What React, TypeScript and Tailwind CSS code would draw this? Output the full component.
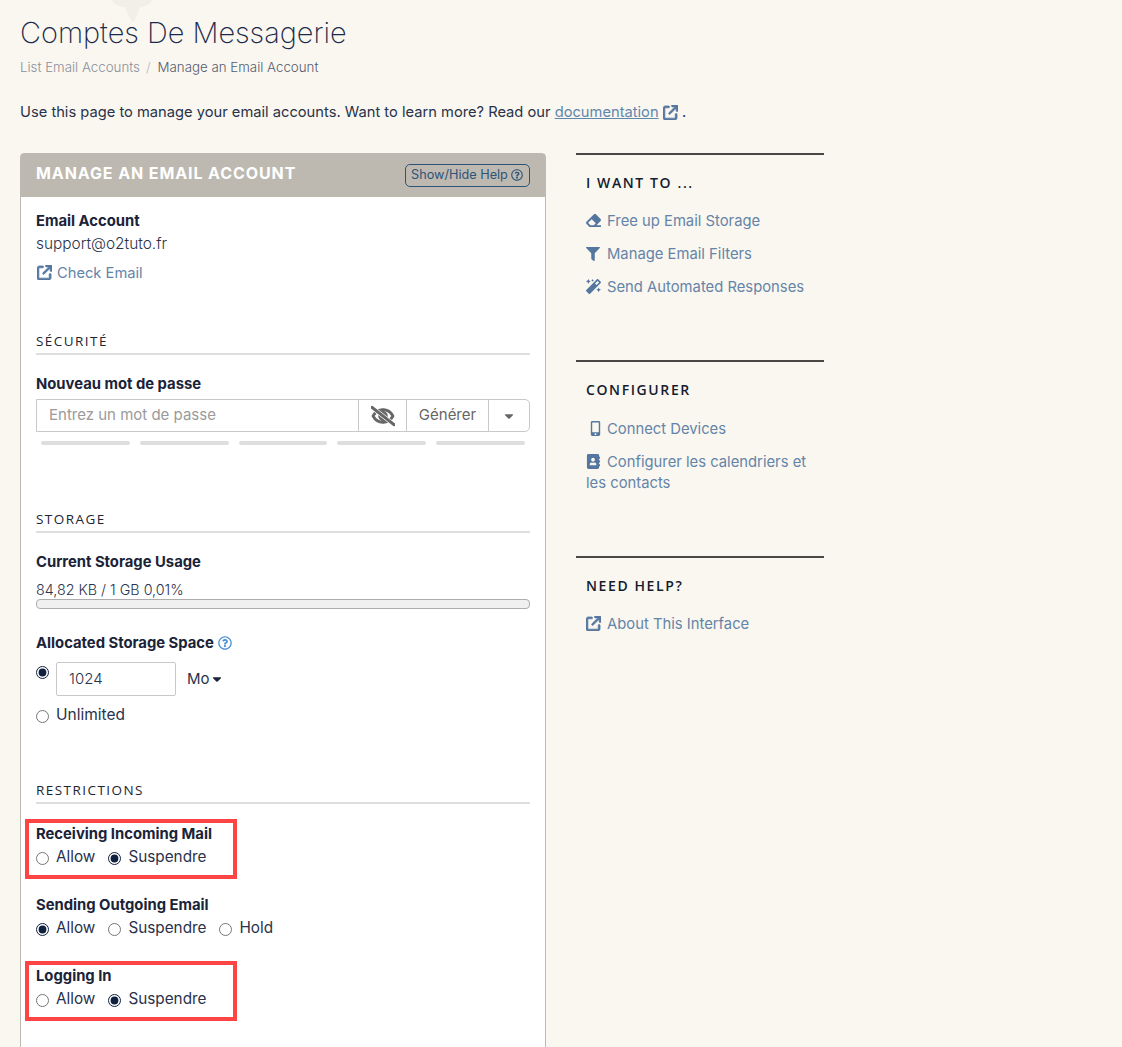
import React from "react";
import { FaEraser, FaFilter, FaMagic, FaAddressBook, FaCaretDown, FaRegEyeSlash, FaRegQuestionCircle, FaMobileAlt } from "react-icons/fa";
import { FaArrowUpRightFromSquare } from "react-icons/fa6";

function ExtIcon({ className }: { className?: string }) {
  return <FaArrowUpRightFromSquare className={className} size={15} stroke="currentColor" strokeWidth={24} />;
}

function Radio({ label, checked, name }: { label: string; checked?: boolean; name: string }) {
  return (
    <label className="flex items-center gap-[7px] mr-[13px]">
      <input type="radio" name={name} defaultChecked={checked} className="w-[13px] h-[13px] mt-[3px] m-0 accent-[#10203f]" />
      <span>{label}</span>
    </label>
  );
}

function SectionTitle({ children, className }: { children: React.ReactNode; className?: string }) {
  return (
    <div className={"border-b-2 border-[#dedede] h-[23px] text-[13.5px] leading-[18px] tracking-[1.45px] text-[#1d2433] font-['Open_Sans',sans-serif] " + (className ?? "")}>
      {children}
    </div>
  );
}

function Field({ label, name, options }: { label: string; name: string; options: [string, boolean][] }) {
  return (
    <div>
      <div className="font-bold text-[14.8px] leading-[20px] text-[#1a2338]">{label}</div>
      <div className="flex mt-[1px] leading-[24px] text-[15.3px]">
        {options.map(([o, c]) => (
          <Radio key={o} name={name} label={o} checked={c} />
        ))}
      </div>
    </div>
  );
}

function SideLink({ icon, children }: { icon: React.ReactNode; children: React.ReactNode }) {
  return (
    <div className="text-[#6484a8] text-[14.8px] leading-[21px] mb-[12px]">
      <span className="inline-flex w-[21px] align-[-2px] text-[#55779f]">{icon}</span>
      {children}
    </div>
  );
}

function SideTitle({ children }: { children: React.ReactNode }) {
  return <div className="text-[14px] leading-[18px] font-semibold tracking-[1.6px] text-[#141c2e] font-['Open_Sans',sans-serif] mt-[19px] mb-[19px]">{children}</div>;
}

export default function App() {
  return (
    <div className="relative h-[1047px] overflow-hidden bg-[#faf7f0] pl-[20px] font-['Inter',sans-serif] text-[15px] text-[#29324a]">
      {/* faded logo behind the title */}
      <svg className="absolute left-[112px] top-0" width="42" height="24" viewBox="0 0 42 24">
        <path d="M0 0h40c-1 4-6 7-12 7-2 5-3 11-7 15-4-4-6-10-8-15C7 7 1 4 0 0z" fill="#f2efe9" />
      </svg>

      <h1 className="relative pt-[14px] text-[28.9px] leading-[38px] font-extralight text-[#1b2a4a]">Comptes De Messagerie</h1>
      <div className="flex mt-[5px] text-[13.3px] leading-[20px] font-light">
        <span className="text-[#8b8f9a]">List Email Accounts</span>
        <span className="text-[#b9b9b9] mx-[6px]">/</span>
        <span className="text-[#555c6e] ml-[1px]">Manage an Email Account</span>
      </div>
      <p className="mt-[25px] leading-[20px] text-[14.7px]">
        Use this page to manage your email accounts. Want to learn more? Read our{" "}
        <span className="text-[#5f86ad] underline">documentation</span>{" "}
        <ExtIcon className="inline text-[#55779f] align-[-3px]" /> .
      </p>

      <div className="flex mt-[31px] items-start">
        <div className="w-[526px] h-[900px] shrink-0 rounded-t-[4px] border border-[#bdbab3] bg-white">
          <div className="flex h-[43px] items-center justify-between bg-[#bdb9b1] pl-[15px] pr-[15px]">
            <div className="text-white font-bold text-[16px] tracking-[0.9px] -mt-[6px]">MANAGE AN EMAIL ACCOUNT</div>
            <button className="flex items-center gap-[3px] h-[23px] w-[125px] pl-[5px] border border-[#2d5478] rounded-[5px] text-[12.7px] text-[#2d5478] -mt-[1px]">
              Show/Hide Help <FaRegQuestionCircle size={12} />
            </button>
          </div>

          <div className="px-[15px]">
            <div className="font-bold text-[14.8px] leading-[20px] text-[#1a2338] mt-[14px]">Email Account</div>
            <div className="leading-[20px] mt-[3px] text-[15.4px] font-light">support@o2tuto.fr</div>
            <div className="leading-[20px] mt-[9px] text-[#6484a8] text-[14.7px]">
              <ExtIcon className="inline text-[#55779f] ml-[1px] mr-[5px] align-[-2px]" />
              Check Email
            </div>

            <SectionTitle className="mt-[49px]">SÉCURITÉ</SectionTitle>
            <div className="font-bold text-[14.8px] leading-[20px] text-[#1a2338] mt-[19px]">Nouveau mot de passe</div>
            <div className="flex h-[33px] mt-[5px] border border-[#c9c9c9] rounded-r-[5px]">
              <input placeholder="Entrez un mot de passe" className="flex-1 min-w-0 pl-[12px] outline-none placeholder:text-[#9a9a9a] text-[15px]" />
              <div className="w-[48px] flex items-center justify-center border-l border-[#c9c9c9] text-[#666]">
                <FaRegEyeSlash size={24} stroke="currentColor" strokeWidth={30} />
              </div>
              <div className="w-[82px] flex items-center justify-center border-l border-[#c9c9c9] text-[#666]">Générer</div>
              <div className="w-[41px] flex items-center justify-center border-l border-[#c9c9c9] text-[#666]">
                <FaCaretDown size={14} />
              </div>
            </div>
            <div className="grid grid-cols-5 gap-[10px] px-[5px] mt-[9px]">
              {[0, 1, 2, 3, 4].map((i) => (
                <div key={i} className="h-[4px] rounded-full bg-[#dedede]" />
              ))}
            </div>

            <SectionTitle className="mt-[65px]">STORAGE</SectionTitle>
            <div className="font-bold text-[14.8px] leading-[20px] text-[#1a2338] mt-[19px]">Current Storage Usage</div>
            <div className="leading-[18px] mt-[9px] font-light text-[14.3px]">84,82 KB / 1 GB 0,01%</div>
            <div className="h-[10px] rounded-[4px] border border-[#adadad] bg-[#f0f0f0]" />

            <div className="flex items-center gap-[4px] font-bold text-[14.8px] leading-[20px] text-[#1a2338] mt-[24px]">
              Allocated Storage Space <FaRegQuestionCircle size={14} className="text-[#4a90d9]" />
            </div>
            <div className="flex mt-[9px]">
              <input type="radio" name="quota" defaultChecked className="w-[13px] h-[13px] mt-[4px] mr-[7px] accent-[#10203f]" />
              <div className="w-[120px] h-[34px] border border-[#c9c9c9] rounded-[2px] pl-[12px] leading-[32px] font-light">1024</div>
              <div className="flex items-center ml-[11px]">
                Mo <FaCaretDown size={14} className="text-[#1a2338]" />
              </div>
            </div>
            <div className="flex items-center gap-[7px] mt-[8px] leading-[22px] text-[15.5px]">
              <input type="radio" name="quota" className="w-[13px] h-[13px] mt-[3px] accent-[#10203f]" />
              Unlimited
            </div>

            <SectionTitle className="mt-[55px]">RESTRICTIONS</SectionTitle>

            <div className="relative mt-[20px]">
              <Field label="Receiving Incoming Mail" name="in" options={[["Allow", false], ["Suspendre", true]]} />
              <div className="absolute -left-[11px] -top-[5px] w-[212px] h-[60px] border-[4px] border-[#ff4444]" />
            </div>
            <div className="mt-[26px]">
              <Field label="Sending Outgoing Email" name="out" options={[["Allow", true], ["Suspendre", false], ["Hold", false]]} />
            </div>
            <div className="relative mt-[26px]">
              <Field label="Logging In" name="log" options={[["Allow", false], ["Suspendre", true]]} />
              <div className="absolute -left-[11px] -top-[5px] w-[212px] h-[60px] border-[4px] border-[#ff4444]" />
            </div>
          </div>
        </div>

        <div className="w-[248px] ml-[30px]">
          <div className="border-t-2 border-[#4a4744] pl-[10px] h-[207px]">
            <SideTitle>I WANT TO ...</SideTitle>
            <SideLink icon={<FaEraser size={15} />}>Free up Email Storage</SideLink>
            <SideLink icon={<FaFilter size={14} />}>Manage Email Filters</SideLink>
            <SideLink icon={<FaMagic size={15} />}>Send Automated Responses</SideLink>
          </div>
          <div className="border-t-2 border-[#4a4744] pl-[10px] h-[196px]">
            <SideTitle>CONFIGURER</SideTitle>
            <div className="h-px" />
            <SideLink icon={<FaMobileAlt size={15} className="ml-[2px]" />}>Connect Devices</SideLink>
            <SideLink icon={<FaAddressBook size={15} />}>Configurer les calendriers et les contacts</SideLink>
          </div>
          <div className="border-t-2 border-[#4a4744] pl-[10px]">
            <SideTitle>NEED HELP?</SideTitle>
            <SideLink icon={<ExtIcon />}>About This Interface</SideLink>
          </div>
        </div>
      </div>
    </div>
  );
}
